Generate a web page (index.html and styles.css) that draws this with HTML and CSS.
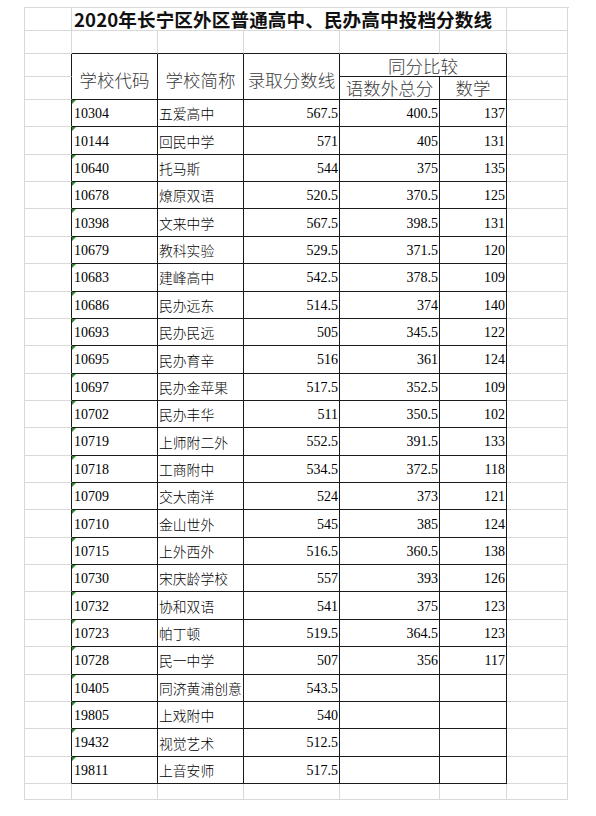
FILE: index.html
```html
<!DOCTYPE html>
<html lang="zh-CN">
<head>
<meta charset="utf-8">
<title>2020年长宁区外区普通高中、民办高中投档分数线</title>
<link rel="stylesheet" href="styles.css">
</head>
<body>
<div class="sheet">
  <!-- row 1: title -->
  <div class="c"></div>
  <div class="c title">2020年长宁区外区普通高中、民办高中投档分数线</div>
  <div class="c"></div>
  <!-- row 2 -->
  <div class="c"></div>
  <div class="c top"></div><div class="c top"></div><div class="c top"></div><div class="c top"></div><div class="c top"></div>
  <div class="c"></div>
  <!-- header rows -->
  <div class="c gl"></div>
  <div class="c t hd span2">学校代码</div>
  <div class="c t hd span2">学校简称</div>
  <div class="c t hd span2">录取分数线</div>
  <div class="c t hd hd-top span-c2">同分比较</div>
  <div class="c"></div>
  <div class="c gl"></div>
  <div class="c t hd">语数外总分</div>
  <div class="c t hd">数学</div>
  <div class="c"></div>

  <div class="c gl"></div><div class="c t code">10304</div><div class="c t name">五爱高中</div><div class="c t num">567.5</div><div class="c t num">400.5</div><div class="c t num">137</div><div class="c"></div>
  <div class="c gl"></div><div class="c t code">10144</div><div class="c t name">回民中学</div><div class="c t num">571</div><div class="c t num">405</div><div class="c t num">131</div><div class="c"></div>
  <div class="c gl"></div><div class="c t code">10640</div><div class="c t name">托马斯</div><div class="c t num">544</div><div class="c t num">375</div><div class="c t num">135</div><div class="c"></div>
  <div class="c gl"></div><div class="c t code">10678</div><div class="c t name">燎原双语</div><div class="c t num">520.5</div><div class="c t num">370.5</div><div class="c t num">125</div><div class="c"></div>
  <div class="c gl"></div><div class="c t code">10398</div><div class="c t name">文来中学</div><div class="c t num">567.5</div><div class="c t num">398.5</div><div class="c t num">131</div><div class="c"></div>
  <div class="c gl"></div><div class="c t code">10679</div><div class="c t name">教科实验</div><div class="c t num">529.5</div><div class="c t num">371.5</div><div class="c t num">120</div><div class="c"></div>
  <div class="c gl"></div><div class="c t code">10683</div><div class="c t name">建峰高中</div><div class="c t num">542.5</div><div class="c t num">378.5</div><div class="c t num">109</div><div class="c"></div>
  <div class="c gl"></div><div class="c t code">10686</div><div class="c t name">民办远东</div><div class="c t num">514.5</div><div class="c t num">374</div><div class="c t num">140</div><div class="c"></div>
  <div class="c gl"></div><div class="c t code">10693</div><div class="c t name">民办民远</div><div class="c t num">505</div><div class="c t num">345.5</div><div class="c t num">122</div><div class="c"></div>
  <div class="c gl"></div><div class="c t code">10695</div><div class="c t name">民办育辛</div><div class="c t num">516</div><div class="c t num">361</div><div class="c t num">124</div><div class="c"></div>
  <div class="c gl"></div><div class="c t code">10697</div><div class="c t name">民办金苹果</div><div class="c t num">517.5</div><div class="c t num">352.5</div><div class="c t num">109</div><div class="c"></div>
  <div class="c gl"></div><div class="c t code">10702</div><div class="c t name">民办丰华</div><div class="c t num">511</div><div class="c t num">350.5</div><div class="c t num">102</div><div class="c"></div>
  <div class="c gl"></div><div class="c t code">10719</div><div class="c t name">上师附二外</div><div class="c t num">552.5</div><div class="c t num">391.5</div><div class="c t num">133</div><div class="c"></div>
  <div class="c gl"></div><div class="c t code">10718</div><div class="c t name">工商附中</div><div class="c t num">534.5</div><div class="c t num">372.5</div><div class="c t num">118</div><div class="c"></div>
  <div class="c gl"></div><div class="c t code">10709</div><div class="c t name">交大南洋</div><div class="c t num">524</div><div class="c t num">373</div><div class="c t num">121</div><div class="c"></div>
  <div class="c gl"></div><div class="c t code">10710</div><div class="c t name">金山世外</div><div class="c t num">545</div><div class="c t num">385</div><div class="c t num">124</div><div class="c"></div>
  <div class="c gl"></div><div class="c t code">10715</div><div class="c t name">上外西外</div><div class="c t num">516.5</div><div class="c t num">360.5</div><div class="c t num">138</div><div class="c"></div>
  <div class="c gl"></div><div class="c t code">10730</div><div class="c t name">宋庆龄学校</div><div class="c t num">557</div><div class="c t num">393</div><div class="c t num">126</div><div class="c"></div>
  <div class="c gl"></div><div class="c t code">10732</div><div class="c t name">协和双语</div><div class="c t num">541</div><div class="c t num">375</div><div class="c t num">123</div><div class="c"></div>
  <div class="c gl"></div><div class="c t code">10723</div><div class="c t name">帕丁顿</div><div class="c t num">519.5</div><div class="c t num">364.5</div><div class="c t num">123</div><div class="c"></div>
  <div class="c gl"></div><div class="c t code">10728</div><div class="c t name">民一中学</div><div class="c t num">507</div><div class="c t num">356</div><div class="c t num">117</div><div class="c"></div>
  <div class="c gl"></div><div class="c t code">10405</div><div class="c t name">同济黄浦创意</div><div class="c t num">543.5</div><div class="c t num"></div><div class="c t num"></div><div class="c"></div>
  <div class="c gl"></div><div class="c t code">19805</div><div class="c t name">上戏附中</div><div class="c t num">540</div><div class="c t num"></div><div class="c t num"></div><div class="c"></div>
  <div class="c gl"></div><div class="c t code">19432</div><div class="c t name">视觉艺术</div><div class="c t num">512.5</div><div class="c t num"></div><div class="c t num"></div><div class="c"></div>
  <div class="c gl"></div><div class="c t code">19811</div><div class="c t name">上音安师</div><div class="c t num">517.5</div><div class="c t num"></div><div class="c t num"></div><div class="c"></div>

  <!-- trailing empty row -->
  <div class="c"></div><div class="c"></div><div class="c"></div><div class="c"></div><div class="c"></div><div class="c"></div><div class="c"></div>
</div>
</body>
</html>
```

FILE: styles.css
```css
html, body {
  margin: 0;
  padding: 0;
  background: #ffffff;
}

body {
  font-family: "Liberation Serif", "Noto Sans CJK SC", serif;
  color: #000;
}

.sheet {
  margin: 7px 0 0 24px;
  width: 544px;
  display: grid;
  grid-template-columns: 47px 86px 86px 96px 100px 67px 61px;
  grid-template-rows: 23px 23px 23px 23px repeat(25, 27.36px) 16px;
  border-top: 1px solid #d9d9d9;
  border-left: 1px solid #d9d9d9;
}

.c {
  box-sizing: border-box;
  border-right: 1px solid #d9d9d9;
  border-bottom: 1px solid #d9d9d9;
  display: flex;
  align-items: center;
  white-space: nowrap;
  min-width: 0;
  min-height: 0;
  position: relative;
  line-height: 1;
}

.title {
  grid-column: span 5;
  font-family: "Noto Sans CJK SC", sans-serif;
  font-weight: 700;
  font-size: 18.6px;
  padding-left: 2px;
  color: #111;
  letter-spacing: 0.1px;
}

.top {
  border-bottom-color: #1a1a1a;
}

.gl {
  border-right-color: #1a1a1a;
}

.t {
  border-right-color: #1a1a1a;
  border-bottom-color: #1a1a1a;
}

.hd {
  justify-content: center;
  font-family: "Noto Sans CJK SC", sans-serif;
  font-weight: 300;
  font-size: 17.5px;
  color: #3a3a3a;
}

.span2 {
  grid-row: span 2;
  padding-top: 6px;
}

.span-c2 {
  grid-column: span 2;
}

.hd-top {
  padding-top: 2px;
}

.code,
.name,
.num {
  font-size: 14px;
  padding-top: 2px;
}

.code {
  padding-left: 2px;
}

.code::before {
  content: "";
  position: absolute;
  left: 0;
  top: 0;
  border-top: 4px solid #2e8b2e;
  border-right: 4px solid transparent;
}

.name {
  padding-left: 1px;
  font-family: "Noto Sans CJK SC", sans-serif;
  font-weight: 300;
  font-size: 13.8px;
}

.num {
  justify-content: flex-end;
  padding-right: 1px;
}
```
